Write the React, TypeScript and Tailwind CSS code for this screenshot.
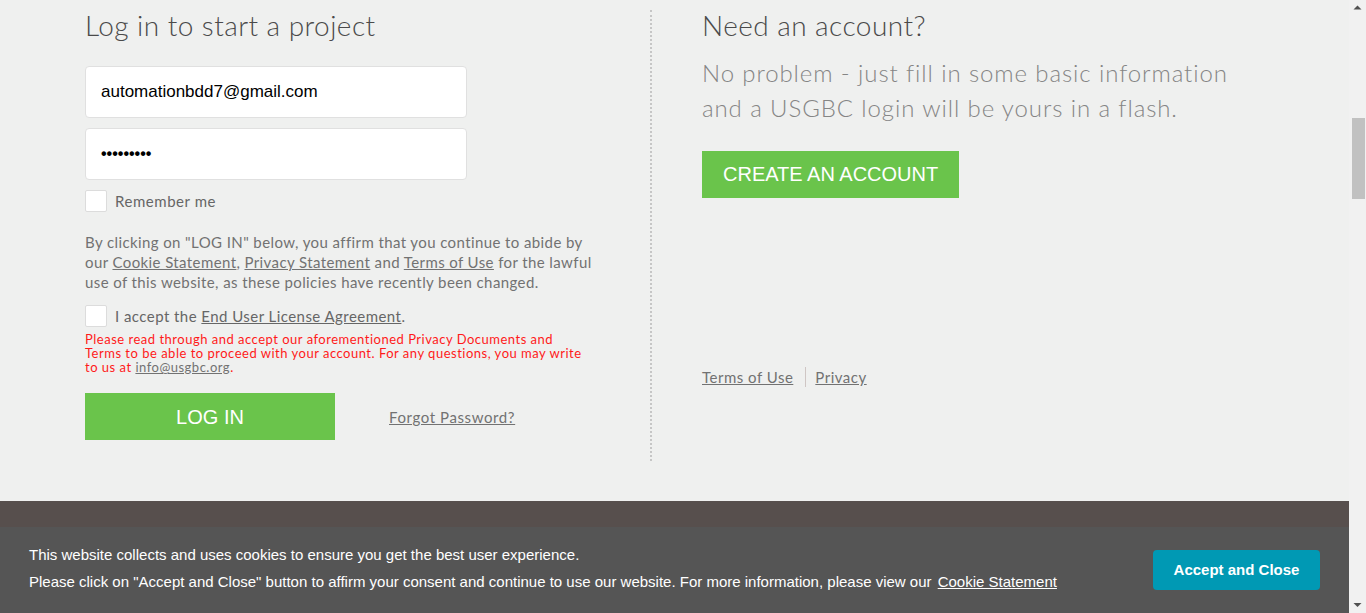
import React from 'react';

const Scrollbar: React.FC = () => (
  <div className="w-[17px] h-full bg-[#f1f1f1] flex flex-col items-center">
    <svg width="17" height="17" viewBox="0 0 17 17" className="shrink-0">
      <path d="M4.5 9.5 L8.5 5.5 L12.5 9.5 Z" fill="#505050" />
    </svg>
    <div className="h-[101px] shrink-0" />
    <div className="w-[13px] h-[81px] bg-[#c1c1c1] ml-[1px]" />
    <div className="flex-1" />
    <svg width="17" height="17" viewBox="0 0 17 17" className="shrink-0">
      <path d="M4.5 7 L8.5 11 L12.5 7 Z" fill="#505050" />
    </svg>
  </div>
);

const Checkbox: React.FC = () => (
  <span className="w-[22px] h-[22px] bg-white border border-[#dcdcdc] rounded-[2px] shrink-0" />
);

const App: React.FC = () => {
  const body = "font-['Lato','Open_Sans',sans-serif]";
  return (
    <div className="w-[1366px] h-[613px] overflow-hidden flex bg-[#eff0ef]">
      <div className="relative flex-1 flex flex-col">
        <div className={`flex pl-[85px] pt-[10px] ${body}`}>
          {/* login column */}
          <div className="w-[567px] h-[451px] border-r-2 border-dotted border-[#c6c6c6] pr-[50px]">
            <h1 className="text-[28px] leading-[30px] font-light tracking-[0.45px] text-[#4a4a4a]">Log in to start a project</h1>
            <div className="mt-[26px] w-[382px] flex flex-col gap-[10px]">
              <div className="h-[52px] bg-white border border-[#e0e0e0] rounded-[4px] flex items-center px-[15px] font-['Liberation_Sans',Arial,sans-serif] text-[17px] text-black">
                automationbdd7@gmail.com
              </div>
              <div className="h-[52px] bg-white border border-[#e0e0e0] rounded-[4px] flex items-center px-[15px] font-['Liberation_Sans',Arial,sans-serif] text-[16px] font-bold text-black">
                •••••••••
              </div>
            </div>
            <label className="mt-[10px] flex items-center gap-[8px] text-[15px] tracking-[0.55px] text-[#666]">
              <Checkbox />
              Remember me
            </label>
            <p className="mt-[19px] text-[15px] leading-[20px] tracking-[0.4px] text-[#727272] w-[520px]">
              By clicking on "LOG IN" below, you affirm that you continue to abide by our{' '}
              <a className="underline">Cookie Statement</a>, <a className="underline">Privacy Statement</a> and{' '}
              <a className="underline">Terms of Use</a> for the lawful use of this website, as these policies have recently been changed.
            </p>
            <label className="mt-[13px] flex items-center gap-[8px] text-[15px] tracking-[0.45px] text-[#666]">
              <Checkbox />
              <span>
                I accept the <a className="underline">End User License Agreement</a>.
              </span>
            </label>
            <p className="mt-[5px] text-[13px] leading-[14px] tracking-[0.5px] text-[#ff1a1a] w-[505px]">
              Please read through and accept our aforementioned Privacy Documents and Terms to be able to proceed with your account. For any questions, you may write to us at{' '}
              <a className="underline text-[#727272]">info@usgbc.org</a>.
            </p>
            <div className="mt-[19px] flex items-center">
              <button className="w-[250px] h-[47px] bg-[#6ac44b] text-white text-[20px] font-['Liberation_Sans',Arial,sans-serif]">
                LOG IN
              </button>
              <a className="ml-[54px] mt-[2px] text-[15px] tracking-[0.6px] text-[#727272] underline">Forgot Password?</a>
            </div>
          </div>

          {/* signup column */}
          <div className="pl-[50px]">
            <h2 className="text-[28px] leading-[30px] font-light tracking-[0.45px] text-[#4a4a4a]">Need an account?</h2>
            <p className="mt-[15px] text-[24px] leading-[35px] font-light tracking-[0.9px] text-[#858585] w-[545px]">
              No problem - just fill in some basic information and a USGBC login will be yours in a flash.
            </p>
            <button className="mt-[26px] h-[47px] px-[21px] pb-[2px] bg-[#6ac44b] text-white text-[20px] font-['Liberation_Sans',Arial,sans-serif]">
              CREATE AN ACCOUNT
            </button>
            <div className="mt-[169px] flex items-center text-[15px] leading-[20px] tracking-[0.5px] text-[#727272]">
              <a className="underline">Terms of Use</a>
              <span className="ml-[12px] mr-[9px] w-px h-[20px] bg-[#cfc6c4]" />
              <a className="underline">Privacy</a>
            </div>
          </div>
        </div>

        <footer className="mt-[40px] flex-1 bg-[#574f4d]" />

        {/* cookie banner */}
        <div className="absolute left-0 right-0 bottom-0 h-[86px] bg-[#555555] flex items-center justify-between pl-[29px] pr-[29px] font-['Liberation_Sans',Arial,sans-serif] text-[15px] text-white">
          <div className="flex flex-col gap-[7px] pb-[4px]">
            <p className="leading-[20px]">This website collects and uses cookies to ensure you get the best user experience.</p>
            <p className="leading-[20px]">
              Please click on "Accept and Close" button to affirm your consent and continue to use our website. For more information, please view our{' '}
              <a className="underline ml-[2px]">Cookie Statement</a>
            </p>
          </div>
          <button className="w-[167px] h-[40px] rounded-[4px] bg-[#0099b4] text-white font-bold text-[15px]">
            Accept and Close
          </button>
        </div>
      </div>
      <Scrollbar />
    </div>
  );
};

export default App;
